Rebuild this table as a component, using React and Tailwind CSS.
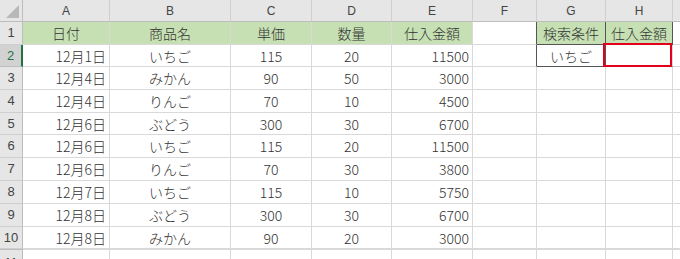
import React from 'react';

const cols = ['A', 'B', 'C', 'D', 'E', 'F', 'G', 'H', ''];

const data = [
  ['12月1日', 'いちご', '115', '20', '11500'],
  ['12月4日', 'みかん', '90', '50', '3000'],
  ['12月4日', 'りんご', '70', '10', '4500'],
  ['12月6日', 'ぶどう', '300', '30', '6700'],
  ['12月6日', 'いちご', '115', '20', '11500'],
  ['12月6日', 'りんご', '70', '30', '3800'],
  ['12月7日', 'いちご', '115', '10', '5750'],
  ['12月8日', 'ぶどう', '300', '30', '6700'],
  ['12月8日', 'みかん', '90', '20', '3000'],
];

const font = { fontFamily: '"Noto Sans CJK JP", "Noto Sans", sans-serif' };

const Cell = ({ children, className = '' }) => (
  <div className={`border-r border-b border-[#d9d9d9] flex items-center overflow-hidden whitespace-nowrap text-[14px] font-light text-[#333] pt-[1px] ${className}`}>
    {children}
  </div>
);

const RowHead = ({ n, active }) => (
  <div
    className={`border-b flex items-center justify-center text-[13px] ${
      active
        ? 'bg-[#d2d2d2] text-[#217346] border-r-2 border-r-[#217346] border-b-[#bdbdbd]'
        : 'bg-[#e6e6e6] text-[#444] border-r border-r-[#bdbdbd] border-b-[#cfcfcf]'
    }`}
    style={{ fontFamily: '"Liberation Sans", Arial, sans-serif' }}
  >
    {n}
  </div>
);

export default function App() {
  return (
    <div className="w-[680px] h-[259px] overflow-hidden bg-white" style={font}>
      <div className="grid grid-cols-[23px_87px_121px_81px_80px_81px_64px_69px_67px_40px] grid-rows-[22px_23px_22px_23px_23px_22px_23px_23px_23px_23px_22px_20px]">
        {/* column headers */}
        <div className="bg-[#e6e6e6] border-r border-b border-[#bdbdbd] relative">
          <div className="absolute right-[3px] bottom-[3px] w-0 h-0 border-l-[13px] border-l-transparent border-b-[13px] border-b-[#b8b8b8]" />
        </div>
        {cols.map((c, i) => (
          <div
            key={i}
            className="bg-[#e6e6e6] border-r border-r-[#cfcfcf] border-b border-b-[#bdbdbd] flex items-center justify-center text-[12px] text-[#444]"
            style={{ fontFamily: '"Liberation Sans", Arial, sans-serif' }}
          >
            {c}
          </div>
        ))}

        {/* row 1 */}
        <RowHead n={1} />
        <Cell className="bg-[#c6e0b4] border-[#c6e0b4] justify-center">日付</Cell>
        <Cell className="bg-[#c6e0b4] border-[#c6e0b4] justify-center">商品名</Cell>
        <Cell className="bg-[#c6e0b4] border-[#c6e0b4] justify-center">単価</Cell>
        <Cell className="bg-[#c6e0b4] border-[#c6e0b4] justify-center">数量</Cell>
        <Cell className="bg-[#c6e0b4] border-[#c6e0b4] border-b-[#d9d9d9] justify-center">仕入金額</Cell>
        <Cell className="border-r-[#555]" />
        <Cell className="bg-[#c6e0b4] border-r-[#555] border-b-[#555] justify-center">検索条件</Cell>
        <Cell className="bg-[#c6e0b4] border-r-[#555] border-b-[#555] justify-center">仕入金額</Cell>
        <Cell />

        {/* row 2 */}
        <RowHead n={2} active />
        {data[0].map((v, i) => (
          <Cell key={i} className={i === 0 || i === 4 ? 'justify-end pr-[3px]' : 'justify-center'}>{v}</Cell>
        ))}
        <Cell className="border-r-[#555]" />
        <Cell className="border-r-[#555] border-b-[#555] justify-center">いちご</Cell>
        <Cell className="border-b-[#555] relative overflow-visible">
          <div className="absolute -left-[3px] -top-[2px] right-0 -bottom-[1px] border-2 border-[#e3001b]" />
        </Cell>
        <Cell />

        {/* rows 3-10 */}
        {data.slice(1).map((row, r) => (
          <React.Fragment key={r}>
            <RowHead n={r + 3} />
            {row.map((v, i) => (
              <Cell key={i} className={i === 0 || i === 4 ? 'justify-end pr-[3px]' : 'justify-center'}>{v}</Cell>
            ))}
            <Cell />
            <Cell />
            <Cell />
            <Cell />
          </React.Fragment>
        ))}

        {/* row 11, cut off by the window */}
        <div className="bg-[#e6e6e6] border-r border-[#bdbdbd] border-t border-t-[#bdbdbd] flex justify-center pt-[3px] text-[13px] text-[#444]" style={{ fontFamily: '"Liberation Sans", Arial, sans-serif' }}>
          11
        </div>
        {cols.map((c, i) => (
          <div key={i} className="border-r border-t border-[#d9d9d9]" />
        ))}
      </div>
    </div>
  );
}
